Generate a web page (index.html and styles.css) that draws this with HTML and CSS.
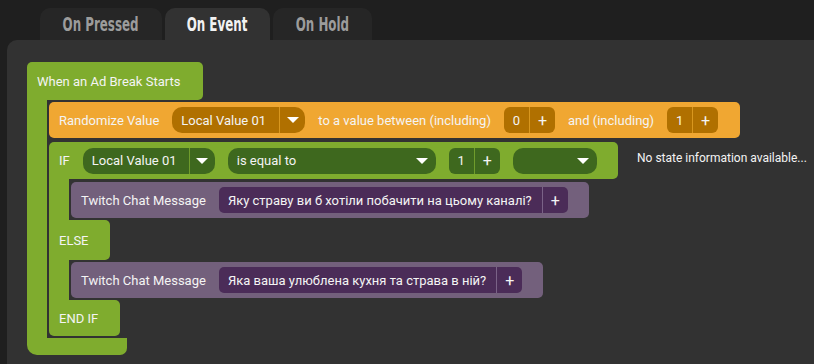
FILE: index.html
```html
<!doctype html>
<html lang="en">
	<head>
		<meta charset="utf-8">
		<title>On Event</title>
		<link rel="stylesheet" href="styles.css">
	</head>
	<body>
		<div class="tabs">
			<div class="tab t-pressed"><span>On Pressed</span></div>
			<div class="tab t-event active"><span>On Event</span></div>
			<div class="tab t-hold"><span>On Hold</span></div>
		</div>

		<div class="panel">
			<div class="workspace">
				<!--event-->
				<div class="event">
					<div class="event-head">When an Ad Break Starts</div>
					<div class="event-body">
						<div class="stmt orange">
							<span class="label">Randomize Value</span>
							<div class="drop">
								<span class="drop-text w-local">Local Value 01</span>
								<span class="drop-btn"><i class="arrow"></i></span>
							</div>
							<span class="label">to a value between (including)</span>
							<div class="num"><span>0</span><span>+</span></div>
							<span class="label">and (including)</span>
							<div class="num"><span>1</span><span>+</span></div>
						</div>

						<div class="if">
							<div class="if-head">
								<span class="label">IF</span>
								<div class="drop">
									<span class="drop-text w-local-g">Local Value 01</span>
									<span class="drop-btn"><i class="arrow"></i></span>
								</div>
								<div class="select w-equal">
									<span>is equal to</span>
									<i class="arrow"></i>
								</div>
								<div class="num"><span>1</span><span>+</span></div>
								<div class="select w-empty">
									<span></span>
									<i class="arrow"></i>
								</div>
							</div>
							<div class="if-body first">
								<div class="stmt purple">
									<span class="label">Twitch Chat Message</span>
									<div class="text-in">
										<span class="text-val">Яку страву ви б хотіли побачити на цьому каналі?</span>
										<span class="text-add">+</span>
									</div>
								</div>
							</div>
							<div class="else-head">ELSE</div>
							<div class="if-body">
								<div class="stmt purple">
									<span class="label">Twitch Chat Message</span>
									<div class="text-in">
										<span class="text-val">Яка ваша улюблена кухня та страва в ній?</span>
										<span class="text-add">+</span>
									</div>
								</div>
							</div>
							<div class="endif-head">END IF</div>
						</div>
					</div>
					<div class="event-foot"></div>
				</div>

				<!--state info floats on the canvas-->
				<div class="state">No state information available...</div>
			</div>
		</div>
	</body>
</html>
```

FILE: styles.css
```css
html,
body {
	margin: 0;
	padding: 0;
}
body {
	height: 364px;
	overflow: hidden;
	font-family: Roboto, "Noto Sans", sans-serif;
	font-size: 13px;
	color: #f4f4f4;
	background: #1f1f1f;
}

/* tabs */
.tabs {
	display: flex;
	gap: 3px;
	height: 32px;
	padding: 8px 0 0 40px;
}
.tab {
	display: flex;
	align-items: center;
	justify-content: center;
	height: 32px;
	border-radius: 10px 10px 0 0;
	color: #9c9c9c;
	background: #262626;
}
.tab span {
	display: inline-block;
	font-family: "DejaVu Sans Condensed", "DejaVu Sans", sans-serif;
	font-size: 20px;
	font-weight: bold;
	transform: scaleX(.66);
	white-space: nowrap;
}
.tab.active {
	color: #f2f2f2;
	background: #323232;
}
.t-pressed { width: 122px; }
.t-event { width: 105px; }
.t-hold { width: 99px; }

/* panel */
.panel {
	height: 324px;
	margin-left: 7px;
	border-top-left-radius: 10px;
	background: #323232;
}
.workspace {
	position: relative;
	padding: 22px 0 0 20px;
}

/* blocks */
.event {
	display: inline-flex;
	flex-direction: column;
	align-items: flex-start;
}
.event-head {
	display: flex;
	align-items: center;
	box-sizing: border-box;
	width: 176px;
	height: 38px;
	padding-left: 10px;
	border-radius: 5px 5px 5px 0;
	background: #7fac2e;
}
.event-body {
	display: flex;
	flex-direction: column;
	align-items: flex-start;
	gap: 4px;
	padding: 2px 0 2px 2px;
	border-left: 20px solid #7fac2e;
}
.event-foot {
	width: 100px;
	height: 17px;
	border-radius: 0 0 7px 10px;
	background: #7fac2e;
}

.stmt,
.if-head {
	display: flex;
	align-items: center;
	gap: 13px;
	box-sizing: border-box;
	height: 36px;
	padding: 0 21px 0 10px;
	border-radius: 5px;
	white-space: nowrap;
}
.orange {
	padding-right: 22px;
	background: #f0a732;
}
.purple {
	background: #73607c;
}

.if {
	display: flex;
	flex-direction: column;
	align-items: flex-start;
}
.if-head {
	height: 37px;
	border-radius: 5px 5px 5px 0;
	background: #7fac2e;
}
.if-body {
	padding: 2px 0 2px 2px;
	border-left: 20px solid #7fac2e;
}
.if-body.first {
	padding-top: 3px;
}
.else-head,
.endif-head {
	display: flex;
	align-items: center;
	box-sizing: border-box;
	padding-left: 10px;
	background: #7fac2e;
}
.else-head {
	width: 61px;
	height: 40px;
	border-radius: 0 5px 5px 0;
}
.endif-head {
	width: 71px;
	height: 36px;
	border-radius: 0 5px 5px 5px;
}

/* inputs */
.drop,
.num,
.select,
.text-in {
	display: flex;
	align-items: stretch;
	height: 26px;
}
.drop {
	border-radius: 10px;
	overflow: hidden;
}
.drop-text {
	display: flex;
	align-items: center;
	padding-left: 9px;
	box-sizing: border-box;
}
.w-local { width: 107px; }
.w-local-g { width: 106px; }
.drop-btn {
	display: flex;
	align-items: center;
	justify-content: center;
	width: 25px;
}
.arrow {
	width: 0;
	height: 0;
	border-left: 6px solid transparent;
	border-right: 6px solid transparent;
	border-top: 6px solid #fff;
}
.orange .drop,
.orange .num {
	background: #b07000;
}
.orange .drop-btn,
.orange .num span + span {
	border-left: 1px solid #d9971f;
}
.if-head .drop,
.if-head .num,
.if-head .select {
	background: #3e681e;
}
.if-head .drop-btn,
.if-head .num span + span {
	border-left: 1px solid #6f9c2c;
}

.num {
	border-radius: 6px;
	overflow: hidden;
}
.num span {
	display: flex;
	align-items: center;
	justify-content: center;
	width: 25px;
}
.num span + span {
	font-size: 16px;
}

.select {
	align-items: center;
	justify-content: space-between;
	box-sizing: border-box;
	padding: 0 8px 0 9px;
	border-radius: 10px;
}
.w-equal { width: 208px; }
.w-empty { width: 84px; }

.text-in {
	border-radius: 5px;
	overflow: hidden;
	background: #4b2c58;
}
.text-val {
	display: flex;
	align-items: center;
	padding: 0 10px 0 9px;
}
.text-add {
	display: flex;
	align-items: center;
	justify-content: center;
	width: 25px;
	font-size: 16px;
	border-left: 1px solid #7a6287;
}

.state {
	position: absolute;
	left: 630px;
	top: 111px;
	font-size: 12px;
	white-space: nowrap;
}
```
